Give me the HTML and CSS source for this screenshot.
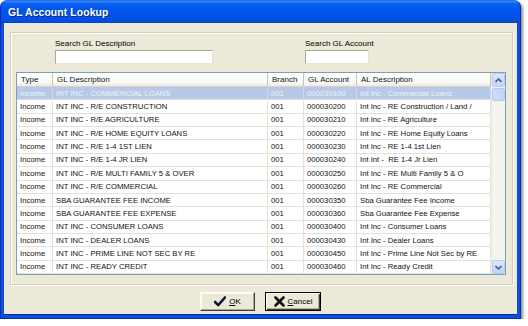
FILE: index.html
```html
<!DOCTYPE html>
<html>
<head>
<meta charset="utf-8">
<link rel="stylesheet" href="styles.css">
</head>
<body>
<div class="window">
  <div class="titlebar"><span class="title">GL Account Lookup</span></div>
  <div class="client">
    <div class="group">
      <div class="search-row">
        <div class="field f1"><div class="label">Search GL Description</div><div class="input w1"></div></div>
        <div class="field f2"><div class="label">Search GL Account</div><div class="input w2"></div></div>
      </div>
      <div class="listview">
        <div class="list">
          <div class="row head"><div class="c">Type</div><div class="c">GL Description</div><div class="c">Branch</div><div class="c">GL Account</div><div class="c">AL Description</div></div>
          <div class="row sel"><div class="c">Income</div><div class="c">INT INC - COMMERCIAL LOANS</div><div class="c">001</div><div class="c">000030100</div><div class="c">Int Inc - Commercial Loans</div></div>
          <div class="row"><div class="c">Income</div><div class="c">INT INC - R/E CONSTRUCTION</div><div class="c">001</div><div class="c">000030200</div><div class="c">Int Inc - RE Construction / Land /</div></div>
          <div class="row"><div class="c">Income</div><div class="c">INT INC - R/E AGRICULTURE</div><div class="c">001</div><div class="c">000030210</div><div class="c">Int Inc - RE Agriculture</div></div>
          <div class="row"><div class="c">Income</div><div class="c">INT INC - R/E HOME EQUITY LOANS</div><div class="c">001</div><div class="c">000030220</div><div class="c">Int Inc - RE Home Equity Loans</div></div>
          <div class="row"><div class="c">Income</div><div class="c">INT INC - R/E 1-4 1ST LIEN</div><div class="c">001</div><div class="c">000030230</div><div class="c">Int Inc - RE 1-4 1st Lien</div></div>
          <div class="row"><div class="c">Income</div><div class="c">INT INC - R/E 1-4 JR LIEN</div><div class="c">001</div><div class="c">000030240</div><div class="c">Int Int -&nbsp; RE 1-4 Jr Lien</div></div>
          <div class="row"><div class="c">Income</div><div class="c">INT INC - R/E MULTI FAMILY 5 &amp; OVER</div><div class="c">001</div><div class="c">000030250</div><div class="c">Int Inc - RE Multi Family 5 &amp; O</div></div>
          <div class="row"><div class="c">Income</div><div class="c">INT INC - R/E COMMERCIAL</div><div class="c">001</div><div class="c">000030260</div><div class="c">Int Inc - RE Commercial</div></div>
          <div class="row"><div class="c">Income</div><div class="c">SBA GUARANTEE FEE INCOME</div><div class="c">001</div><div class="c">000030350</div><div class="c">Sba Guarantee Fee Income</div></div>
          <div class="row"><div class="c">Income</div><div class="c">SBA GUARANTEE FEE EXPENSE</div><div class="c">001</div><div class="c">000030360</div><div class="c">Sba Guarantee Fee Expense</div></div>
          <div class="row"><div class="c">Income</div><div class="c">INT INC - CONSUMER LOANS</div><div class="c">001</div><div class="c">000030400</div><div class="c">Int Inc - Consumer Loans</div></div>
          <div class="row"><div class="c">Income</div><div class="c">INT INC - DEALER LOANS</div><div class="c">001</div><div class="c">000030430</div><div class="c">Int Inc - Dealer Loans</div></div>
          <div class="row"><div class="c">Income</div><div class="c">INT INC - PRIME LINE NOT SEC BY RE</div><div class="c">001</div><div class="c">000030450</div><div class="c">Int Inc - Prime Line Not Sec by RE</div></div>
          <div class="row"><div class="c">Income</div><div class="c">INT INC - READY CREDIT</div><div class="c">001</div><div class="c">000030460</div><div class="c">Int Inc - Ready Credit</div></div>
        </div>
        <div class="vscroll">
          <div class="sbtn up"><svg width="7" height="5" viewBox="0 0 7 5"><path d="M0.5 4 L3.5 1 L6.5 4" fill="none" stroke="#4d6185" stroke-width="1.6"/></svg></div>
          <div class="thumb"></div>
          <div class="track"></div>
          <div class="sbtn down"><svg width="7" height="5" viewBox="0 0 7 5"><path d="M0.5 1 L3.5 4 L6.5 1" fill="none" stroke="#4d6185" stroke-width="1.6"/></svg></div>
        </div>
      </div>
    </div>
    <div class="buttons">
      <div class="btn"><svg class="ico" width="12" height="11" viewBox="0 0 12 11"><path d="M1 6 L4.2 9.2 L11 1.5" fill="none" stroke="#0c1a3a" stroke-width="2.6" stroke-linecap="round" stroke-linejoin="round"/></svg><span><u>O</u>K</span></div>
      <div class="btn default"><svg class="ico" width="11" height="11" viewBox="0 0 11 11"><path d="M1.5 1.5 L9.5 9.5 M9.5 1.5 L1.5 9.5" fill="none" stroke="#101010" stroke-width="2.6" stroke-linecap="round"/></svg><span><u>C</u>ancel</span></div>
    </div>
  </div>
</div>
</body>
</html>
```

FILE: styles.css
```css
html, body {
  margin: 0;
  padding: 0;
  background: #ffffff;
}
body {
  font-family: "Liberation Sans", Arial, sans-serif;
  font-size: 8px;
  color: #000;
}
.window {
  width: 521px;
  height: 319px;
  box-sizing: border-box;
  background: #0a4fe0;
  border-radius: 7px 7px 0 0;
  border: 1px solid #0831a8;
  border-top-color: #2a6af0;
  box-shadow: 2px 2px 3px rgba(0, 0, 0, 0.45);
  display: flex;
  flex-direction: column;
  padding: 0 3px 3px 3px;
}
.titlebar {
  height: 22px;
  margin: 0 -3px;
  border-radius: 6px 6px 0 0;
  background: linear-gradient(to bottom, #3a8cfb 0%, #0f62ef 12%, #0058ee 30%, #0353e9 60%, #0550e0 85%, #0745d0 100%);
  display: flex;
  align-items: center;
  padding-left: 7px;
}
.title {
  color: #fff;
  font-weight: bold;
  font-size: 10.4px;
  text-shadow: 1px 1px 0 #0a2a8a;
  letter-spacing: 0.1px;
}
.client {
  flex: 1;
  background: #ece9d8;
  display: flex;
  flex-direction: column;
  padding: 9px 4px 0 6px;
  border-bottom: 1px solid #0a2a9a;
}
.group {
  height: 253px;
  box-sizing: border-box;
  border: 1px solid #d0d0bf;
  box-shadow: inset 1px 1px 0 #fff, 1px 1px 0 #fff;
  padding: 5px 6px 0 5px;
  display: flex;
  flex-direction: column;
}
.search-row {
  display: flex;
  padding-left: 39px;
  gap: 92px;
}
.label {
  height: 11px;
  line-height: 11px;
  margin-bottom: 1px;
}
.input {
  height: 14px;
  box-sizing: border-box;
  background: #fff;
  border: 1px solid #a9a797;
  border-right-color: #e6e4d8;
  border-bottom-color: #e6e4d8;
}
.w1 { width: 158px; }
.w2 { width: 64px; }
.listview {
  margin-top: 8px;
  height: 203px;
  box-sizing: border-box;
  border: 1px solid #7f9db9;
  background: #fff;
  display: flex;
}
.list {
  flex: 1;
  display: flex;
  flex-direction: column;
}
.row {
  display: grid;
  grid-template-columns: 36px 215px 36px 53px 134px;
  height: 13.36px;
  box-sizing: border-box;
  border-bottom: 1px solid #e2e1da;
  font-size: 7.7px;
  color: #111;
}
.row .c {
  border-right: 1px solid #e2e1da;
  padding-left: 3px;
  display: flex;
  align-items: center;
  white-space: nowrap;
  overflow: hidden;
}
.row.head {
  height: 14px;
  background: linear-gradient(to bottom, #ffffff 0%, #fbfbf8 70%, #ebeae2 100%);
  border-bottom: 1px solid #d6d3c4;
  font-size: 8px;
}
.row.head .c {
  border-right: 1px solid #c7c5b2;
  padding-left: 4px;
}
.row.sel {
  background: #b6c9e8;
  color: #eef3fb;
}
.row.sel .c {
  border-right-color: #c9d6ec;
}
.vscroll {
  width: 13px;
  display: flex;
  flex-direction: column;
  background: #f4f3ee;
  border-left: 1px solid #eeede5;
}
.sbtn {
  height: 14px;
  box-sizing: border-box;
  background: linear-gradient(to bottom, #dce6fc, #c3d4fb);
  border: 1px solid #b8cbf0;
  border-radius: 2px;
  display: flex;
  align-items: center;
  justify-content: center;
}
.thumb {
  height: 13px;
  margin-top: 1px;
  box-sizing: border-box;
  background: linear-gradient(to right, #cddcfc, #c2d3fa);
  border: 1px solid #b4c8f6;
  border-radius: 2px;
}
.track {
  flex: 1;
}
.buttons {
  display: flex;
  justify-content: center;
  gap: 10px;
  margin-top: 7px;
  padding-right: 2px;
}
.btn {
  width: 55px;
  height: 19px;
  box-sizing: border-box;
  background: #ece9d8;
  border: 1px solid;
  border-color: #ffffff #404040 #404040 #ffffff;
  box-shadow: inset -1px -1px 0 #aca899, inset 1px 1px 0 #f8f7f0;
  display: flex;
  align-items: center;
  justify-content: center;
  gap: 3px;
  font-size: 8px;
}
.btn.default {
  width: 56px;
  border: 1px solid #000;
  box-shadow: inset 1px 1px 0 #ffffff, inset -1px -1px 0 #404040, inset -2px -2px 0 #aca899;
}
.ico {
  display: block;
}
u {
  text-decoration: underline;
}
```
